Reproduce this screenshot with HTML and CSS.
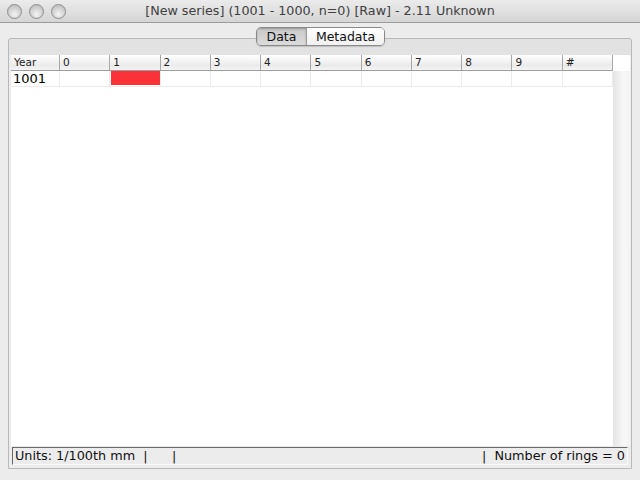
FILE: index.html
```html
<!DOCTYPE html>
<html>
<head>
<meta charset="utf-8">
<link rel="stylesheet" href="styles.css">
</head>
<body>
<div class="window">
  <div class="titlebar">
    <div class="lights">
      <span class="light"></span><span class="light"></span><span class="light"></span>
    </div>
    <div class="title">[New series] (1001 - 1000, n=0) [Raw] - 2.11 Unknown</div>
  </div>
  <div class="content">
    <div class="tabs">
      <span class="tab active">Data</span><span class="tab">Metadata</span>
    </div>
    <div class="panel">
      <div class="tablearea">
        <div class="tablewrap">
          <div class="grid header">
            <div class="hc">Year</div><div class="hc">0</div><div class="hc">1</div><div class="hc">2</div><div class="hc">3</div><div class="hc">4</div><div class="hc">5</div><div class="hc">6</div><div class="hc">7</div><div class="hc">8</div><div class="hc">9</div><div class="hc">#</div>
          </div>
          <div class="body">
            <div class="grid row">
              <div class="c year">1001</div><div class="c"></div><div class="c red"></div><div class="c"></div><div class="c"></div><div class="c"></div><div class="c"></div><div class="c"></div><div class="c"></div><div class="c"></div><div class="c"></div><div class="c"></div>
            </div>
          </div>
        </div>
        <div class="scroll">
          <div class="corner"></div>
          <div class="track"></div>
        </div>
      </div>
      <div class="status">
        <span>Units: 1/100th mm &nbsp;| &nbsp;&nbsp;&nbsp;&nbsp; |</span>
        <span>| &nbsp;Number of rings = 0</span>
      </div>
    </div>
  </div>
</div>
</body>
</html>
```

FILE: styles.css
```css
* { box-sizing: border-box; }
html, body { margin: 0; padding: 0; }
body {
  width: 640px;
  height: 480px;
  overflow: hidden;
  font-family: "DejaVu Sans", "Liberation Sans", sans-serif;
  background: #ececec;
  color: #000;
}
.window { width: 640px; height: 480px; display: flex; flex-direction: column; }
.titlebar {
  height: 23px;
  display: flex;
  align-items: center;
  background: linear-gradient(#ebebeb, #d5d5d5);
  border-bottom: 1px solid #9c9c9c;
  position: relative;
}
.lights { display: flex; gap: 7px; padding-left: 7px; }
.light {
  width: 15px; height: 15px; border-radius: 50%;
  background: radial-gradient(circle at 50% 70%, #f4f4f4 0%, #d0d0d0 55%, #b4b4b4 100%);
  border: 1px solid #8e8e8e;
}
.title {
  position: absolute; left: 0; right: 0; top: 3px;
  text-align: center;
  font-size: 12.7px;
  color: #404040;
}
.content { flex: 1; position: relative; padding: 15px 8px 11px 8px; }
.tabs {
  position: absolute; left: 256px; top: 4px;
  display: flex; height: 19px;
  border: 1px solid #8a8a8a;
  border-radius: 5px;
  overflow: hidden;
  box-shadow: 0 1px 1px rgba(0,0,0,0.15);
  z-index: 2;
}
.tab {
  font-size: 12.5px; line-height: 17px;
  padding: 0 12px;
  background: linear-gradient(#ffffff, #f0f0f0);
  color: #111;
}
.tab.active {
  width: 50px; padding: 0; text-align: center;
  background: linear-gradient(#c8c8c8, #dcdcdc);
  border-right: 1px solid #9a9a9a;
  box-shadow: inset 0 1px 2px rgba(0,0,0,0.25);
}
.tab:last-child { width: 77px; padding: 0; text-align: center; }
.panel {
  height: 100%;
  border: 1px solid #b9b9b9;
  border-radius: 3px 3px 0 0;
  background: linear-gradient(#e2e2e2 0, #e2e2e2 16px, #ececec 16px);
  padding: 16px 1px 1px 2px;
  display: flex; flex-direction: column;
}
.tablearea { flex: 1; display: flex; }
.tablewrap { width: 603px; display: flex; flex-direction: column; background: #fff; }
.grid { display: grid; grid-template-columns: 49px repeat(11, 1fr); }
.header { height: 16px; border-bottom: 1px solid #9e9e9e; background: linear-gradient(#ffffff, #ebebeb 70%, #f4f4f4); }
.hc { font-size: 10.5px; line-height: 15px; padding-left: 3px; border-right: 1px solid #a8a8a8; color: #222; }
.body { flex: 1; background: #fff; }
.row { height: 16px; border-bottom: 1px solid #ececec; }
.c { border-right: 1px solid #ececec; font-size: 13px; line-height: 15px; padding-left: 2px; }
.c.red { background: #fb3338; margin: 0 0 1px 1px; }
.scroll { width: 17px; display: flex; flex-direction: column; }
.corner { height: 16px; background: #fff; }
.track { flex: 1; background: linear-gradient(to right, #e4e4e4, #f7f7f7 60%, #f3f3f3); }
.status {
  height: 18px; margin: 1px 2px 2px 1px;
  border-top: 1px solid #6a6a6a; border-left: 1px solid #6a6a6a;
  border-right: 1px solid #fafafa; border-bottom: 1px solid #fafafa;
  background: #ececec;
  display: flex; justify-content: space-between;
  font-size: 12.8px; line-height: 16px; padding: 0 2px 0 2px;
  color: #111;
}
```
